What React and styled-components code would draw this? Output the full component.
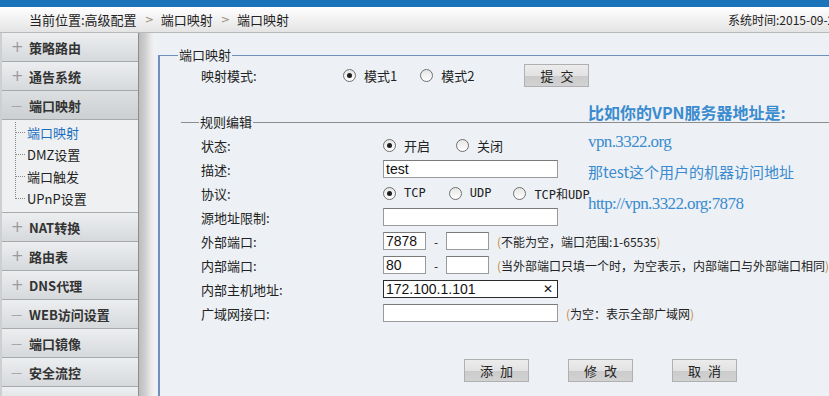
import React from "react";
import styled, { createGlobalStyle } from "styled-components";

const GlobalStyle = createGlobalStyle`
  html, body {
    margin: 0;
    padding: 0;
    width: 829px;
    height: 396px;
    overflow: hidden;
    font-family: "Noto Sans CJK SC", "DejaVu Sans", sans-serif;
    color: #222;
  }
  * {
    box-sizing: border-box;
  }
`;

const Page = styled.div`
  display: flex;
  flex-direction: column;
  width: 829px;
  height: 396px;
  overflow: hidden;
`;

const TopBar = styled.div`
  height: 7px;
  background: #1b74b9;
`;

const Crumb = styled.div`
  display: flex;
  align-items: center;
  height: 26px;
  padding-left: 29px;
  font-size: 13px;
  white-space: nowrap;
  overflow: hidden;
  background: linear-gradient(#ffffff, #f4f4f4 40%, #e4e4e4);
  border-bottom: 1px solid #b9b9b9;
`;

const CrumbPath = styled.div`
  flex: 0 0 699px;
  display: flex;
  align-items: center;
`;

const Arrow = styled.span`
  margin: 0 7px 0 8px;
  color: #9a8a7a;
  font-family: "DejaVu Sans", sans-serif;
  font-size: 11px;
`;

const Clock = styled.span`
  flex: 0 0 auto;
  font-size: 12px;
`;

const Main = styled.div`
  flex: 1;
  display: flex;
  min-height: 0;
`;

const Sidebar = styled.div`
  flex: 0 0 139px;
  display: flex;
  flex-direction: column;
  border-left: 2px solid #cfcfcf;
  border-right: 1px solid #8d8d8d;
  background: #eceeef;
  overflow: hidden;
`;

const MenuItem = styled.div`
  flex: 0 0 29px;
  display: flex;
  align-items: center;
  padding-left: 6px;
  font-size: 13px;
  font-weight: bold;
  color: #333;
  border-bottom: 1px solid #a7aaad;
  background: ${(p) =>
    p.open
      ? "linear-gradient(#dcdee0, #cdd0d3)"
      : "linear-gradient(#eceef0, #d6d9dc)"};
`;

const Sign = styled.span`
  flex: 0 0 21px;
  padding-left: 3px;
  color: #9a9a9a;
  font-family: "DejaVu Sans", sans-serif;
  font-weight: normal;
  font-size: ${(p) => (p.minus ? "11px" : "15px")};
`;

const SubList = styled.div`
  flex: 0 0 92px;
  position: relative;
  padding: 1px 0 3px 13px;
  border-bottom: 1px solid #a7aaad;
  background: #eef0f1;
`;

const SubItem = styled.div`
  height: 22px;
  display: flex;
  align-items: center;
  font-size: 13px;
  color: ${(p) => (p.active ? "#1b6fc0" : "#222")};

  &::before {
    content: "";
    width: 10px;
    margin-right: 2px;
    border-top: 1px dotted #888;
  }
`;

const TreeLine = styled.div`
  position: absolute;
  left: 13px;
  top: 2px;
  height: 75px;
  border-left: 1px dotted #888;
`;

const Splitter = styled.div`
  flex: 0 0 16px;
  background: linear-gradient(
    90deg,
    #bdbdbd,
    #cfcfcf 40%,
    #e6e6e6 70%,
    #f3f3f3
  );
`;

const Content = styled.div`
  flex: 1;
  position: relative;
  background: #edf1f5;
  padding: 14px 0 0 3px;
  overflow: hidden;
`;

const Outer = styled.fieldset`
  margin: 0 -20px 0 0;
  padding: 0 0 40px 21px;
  border: none;
  border-top: 1px solid #6e90ba;
  border-left: 2px solid #6e90ba;
  min-height: 400px;
`;

const Legend = styled.legend`
  margin-left: ${(p) => p.shift || 0}px;
  padding: 0 1px;
  font-size: 13px;
  line-height: 16px;
`;

const Inner = styled.fieldset`
  margin: 27px 0 0 0;
  padding: 3px 0 0 20px;
  border: none;
  border-top: 1px solid #8d8d8d;
`;

const Row = styled.div`
  display: flex;
  align-items: center;
  height: 24px;
  padding-left: ${(p) => p.indent || 0}px;
`;

const Label = styled.span`
  flex: 0 0 ${(p) => p.w}px;
  font-size: 13px;
`;

const Choice = styled.span`
  display: inline-flex;
  align-items: center;
  margin-right: ${(p) => p.gap}px;
  font-size: ${(p) => (p.latin ? "12px" : "13px")};
  font-family: ${(p) =>
    p.latin
      ? '"DejaVu Sans Mono", "Noto Sans CJK SC", monospace'
      : '"Noto Sans CJK SC", sans-serif'};
`;

const Radio = styled.span`
  position: relative;
  width: 13px;
  height: 13px;
  margin-right: 8px;
  border-radius: 50%;
  border: 1px solid #6f6f6f;
  background: linear-gradient(#e6e6e6, #ffffff);

  &::after {
    content: "";
    display: ${(p) => (p.checked ? "block" : "none")};
    position: absolute;
    left: 3px;
    top: 3px;
    width: 5px;
    height: 5px;
    border-radius: 50%;
    background: #1e1e1e;
  }
`;

const Field = styled.div`
  display: flex;
  align-items: center;
  justify-content: space-between;
  width: ${(p) => p.w}px;
  height: 18px;
  padding: 0 4px 0 2px;
  background: #fff;
  border: 1px solid ${(p) => (p.focus ? "#2b2b2b" : "#9a9a9a")};
  border-top-color: ${(p) => (p.focus ? "#2b2b2b" : "#7a7a7a")};
  font-family: "Liberation Sans", Arial, sans-serif;
  font-size: 14px;
  color: #111;
`;

const Clear = styled.span`
  font-size: 12px;
  font-family: "DejaVu Sans", sans-serif;
`;

const Dash = styled.span`
  width: 20px;
  text-align: center;
  font-size: 12px;
`;

const Hint = styled.span`
  margin-left: 8px;
  font-size: 12px;
  white-space: nowrap;
  color: #222;
`;

const Paren = styled.span`
  color: #c98a3a;
`;

const Button = styled.button`
  width: 65px;
  height: 23px;
  padding: 0;
  border: 1px solid #b0b0b0;
  background: linear-gradient(#ececec, #e2e2e2 50%, #cbcbcb 51%, #d2d2d2);
  font-family: "Noto Sans CJK SC", sans-serif;
  font-size: 13px;
  letter-spacing: 7px;
  text-indent: 7px;
  color: #222;
`;

const Actions = styled.div`
  display: flex;
  gap: 39px;
  padding: 34px 0 0 263px;
`;

const Note = styled.div`
  position: absolute;
  left: 433px;
  top: ${(p) => p.top}px;
  color: #3a8bcf;
  white-space: nowrap;
  font-size: ${(p) => p.size}px;
  font-weight: ${(p) => (p.bold ? "bold" : "normal")};
  letter-spacing: ${(p) => p.ls || 0}px;
  font-family: ${(p) =>
    p.serif
      ? '"Liberation Serif", "Noto Sans CJK SC", serif'
      : '"Noto Sans CJK SC", sans-serif'};
`;

const menuTop = [{ name: "策略路由" }, { name: "通告系统" }];

const menuBottom = [
  { name: "NAT转换" },
  { name: "路由表" },
  { name: "DNS代理" },
  { name: "WEB访问设置", minus: true },
  { name: "端口镜像", minus: true },
  { name: "安全流控", minus: true },
  { name: "LAN/WAN配置", minus: true },
];

const subItems = ["端口映射", "DMZ设置", "端口触发", "UPnP设置"];

const Hinted = ({ children }) => (
  <Hint>
    <Paren>(</Paren>
    {children}
    <Paren>)</Paren>
  </Hint>
);

export default function App() {
  return (
    <Page>
      <GlobalStyle />
      <TopBar />
      <Crumb>
        <CrumbPath>
          当前位置:高级配置<Arrow>&gt;</Arrow>端口映射<Arrow>&gt;</Arrow>端口映射
        </CrumbPath>
        <Clock>系统时间:2015-09-21 10:32:18</Clock>
      </Crumb>
      <Main>
        <Sidebar>
          {menuTop.map((m) => (
            <MenuItem key={m.name}>
              <Sign>+</Sign>
              {m.name}
            </MenuItem>
          ))}
          <MenuItem open>
            <Sign minus>—</Sign>
            端口映射
          </MenuItem>
          <SubList>
            <TreeLine />
            {subItems.map((s, i) => (
              <SubItem key={s} active={i === 0}>
                {s}
              </SubItem>
            ))}
          </SubList>
          {menuBottom.map((m) => (
            <MenuItem key={m.name}>
              <Sign minus={m.minus}>{m.minus ? "—" : "+"}</Sign>
              {m.name}
            </MenuItem>
          ))}
        </Sidebar>
        <Splitter />
        <Content>
          <Outer>
            <Legend shift={-3}>端口映射</Legend>
            <Row indent={20}>
              <Label w={142}>映射模式:</Label>
              <Choice gap={23}>
                <Radio checked />
                模式1
              </Choice>
              <Choice gap={50}>
                <Radio />
                模式2
              </Choice>
              <Button>提交</Button>
            </Row>
            <Inner>
              <Legend shift={-2}>规则编辑</Legend>
              <Row>
                <Label w={182}>状态:</Label>
                <Choice gap={26}>
                  <Radio checked />
                  开启
                </Choice>
                <Choice gap={0}>
                  <Radio />
                  关闭
                </Choice>
              </Row>
              <Row>
                <Label w={182}>描述:</Label>
                <Field w={175}>test</Field>
              </Row>
              <Row>
                <Label w={182}>协议:</Label>
                <Choice gap={23} latin>
                  <Radio checked />
                  TCP
                </Choice>
                <Choice gap={22} latin>
                  <Radio />
                  UDP
                </Choice>
                <Choice gap={0} latin>
                  <Radio />
                  TCP和UDP
                </Choice>
              </Row>
              <Row>
                <Label w={182}>源地址限制:</Label>
                <Field w={175} />
              </Row>
              <Row>
                <Label w={182}>外部端口:</Label>
                <Field w={43}>7878</Field>
                <Dash>-</Dash>
                <Field w={43} />
                <Hinted>不能为空，端口范围:1-65535</Hinted>
              </Row>
              <Row>
                <Label w={182}>内部端口:</Label>
                <Field w={43}>80</Field>
                <Dash>-</Dash>
                <Field w={43} />
                <Hinted>当外部端口只填一个时，为空表示，内部端口与外部端口相同</Hinted>
              </Row>
              <Row>
                <Label w={182}>内部主机地址:</Label>
                <Field w={175} focus>
                  172.100.1.101
                  <Clear>✕</Clear>
                </Field>
              </Row>
              <Row>
                <Label w={182}>广域网接口:</Label>
                <Field w={175} />
                <Hinted>为空：表示全部广域网</Hinted>
              </Row>
              <Actions>
                <Button>添加</Button>
                <Button>修改</Button>
                <Button>取消</Button>
              </Actions>
            </Inner>
          </Outer>
          <Note top={67} size={16} bold>
            比如你的VPN服务器地址是:
          </Note>
          <Note top={99} size={17} serif ls={-0.6}>
            vpn.3322.org
          </Note>
          <Note top={128} size={15}>
            那test这个用户的机器访问地址
          </Note>
          <Note top={161} size={17} serif ls={-0.6}>
            http://vpn.3322.org:7878
          </Note>
        </Content>
      </Main>
    </Page>
  );
}
